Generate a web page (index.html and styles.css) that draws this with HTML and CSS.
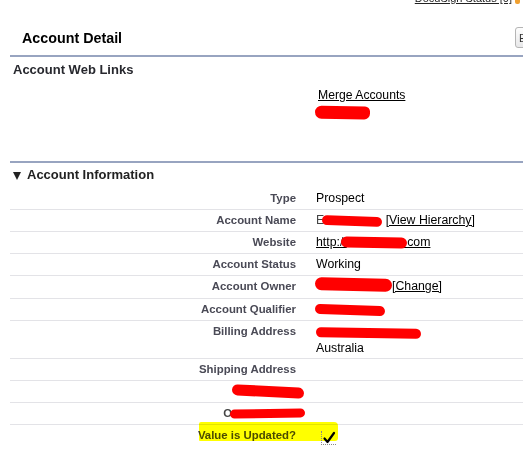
FILE: index.html
```html
<!DOCTYPE html>
<html lang="en">
<head>
<meta charset="utf-8">
<title>Account Detail</title>
<link rel="stylesheet" href="styles.css">
</head>
<body>
  <div class="topbar">
    <a class="toplink" href="#">DocuSign Status [0]</a>
    <span class="topicon"></span>
  </div>

  <div class="page">
    <div class="detail-head">
      <h2 class="detail-title">Account Detail</h2>
      <button class="btn" type="button">Edit</button>
    </div>

    <section class="links">
      <h3 class="section-title">Account Web Links</h3>
      <div class="link-list">
        <a class="plain-link" href="#">Merge Accounts</a>
        <span class="scrib scrib-weblink"></span>
      </div>
    </section>

    <section class="info">
      <h3 class="section-title info-title"><span class="tri"></span>Account Information</h3>
      <div class="fields">
        <div class="row">
          <div class="label">Type</div>
          <div class="value">Prospect</div>
        </div>
        <div class="row">
          <div class="label">Account Name</div>
          <div class="value"><span class="peek">E</span><span class="scrib scrib-name"></span> <a class="plain-link" href="#">[View Hierarchy]</a></div>
        </div>
        <div class="row">
          <div class="label">Website</div>
          <div class="value"><a class="plain-link" href="#">http://<span class="scrib scrib-web"></span>.com</a></div>
        </div>
        <div class="row">
          <div class="label">Account Status</div>
          <div class="value">Working</div>
        </div>
        <div class="row row-tall">
          <div class="label">Account Owner</div>
          <div class="value"><span class="scrib scrib-owner"></span><a class="plain-link" href="#">[Change]</a></div>
        </div>
        <div class="row">
          <div class="label">Account Qualifier</div>
          <div class="value"><span class="scrib scrib-qual"></span></div>
        </div>
        <div class="row">
          <div class="label">Billing Address</div>
          <div class="value value-address"><span class="scrib scrib-bill"></span><br>Australia</div>
        </div>
        <div class="row">
          <div class="label">Shipping Address</div>
          <div class="value"></div>
        </div>
        <div class="row">
          <div class="label"><span class="scrib scrib-lbl1"></span></div>
          <div class="value"></div>
        </div>
        <div class="row">
          <div class="label"><span class="peek">O</span><span class="scrib scrib-lbl2"></span></div>
          <div class="value"></div>
        </div>
        <div class="row row-last">
          <span class="marker"></span>
          <div class="label">Value is Updated?</div>
          <div class="value">
            <span class="checkimg">
              <svg width="14" height="13" viewBox="0 0 14 13">
                <path d="M2.5 7.5 L5.5 11 L12 2" fill="none" stroke="#000" stroke-width="2.2" stroke-linecap="round" stroke-linejoin="round"/>
              </svg>
            </span>
          </div>
        </div>
      </div>
    </section>
  </div>
</body>
</html>
```

FILE: styles.css
```css
html, body {
  margin: 0;
  padding: 0;
  overflow: hidden;
  background: #fff;
}

body {
  width: 523px;
  height: 463px;
  font-family: "Liberation Sans", Arial, sans-serif;
  font-size: 12px;
  color: #000;
}

/* clipped utility links along the very top */
.topbar {
  height: 6px;
  overflow: hidden;
  display: flex;
  justify-content: flex-end;
  align-items: flex-start;
  gap: 3px;
  padding-right: 3px;
}

.toplink {
  font-size: 11px;
  line-height: 13px;
  margin-top: -8px;
  color: #222;
  text-decoration: underline;
}

.topicon {
  width: 5px;
  height: 4px;
  background: #f0a030;
  border-radius: 0 0 2px 2px;
}

.page {
  margin-left: 10px;
}

/* block header */
.detail-head {
  display: flex;
  align-items: center;
  justify-content: space-between;
  padding: 21px 0 7px 12px;
  border-bottom: 2px solid #98a4c0;
  overflow: hidden;
}

.detail-title {
  margin: 0;
  font-size: 14.3px;
  line-height: 20px;
  font-weight: bold;
  color: #000;
}

.btn {
  flex-shrink: 0;
  height: 21px;
  margin-right: -22px;
  padding: 0 6px 0 3px;
  font-family: "Liberation Sans", Arial, sans-serif;
  font-size: 11px;
  color: #333;
  background: linear-gradient(#fdfdfd, #e8e8e9);
  border: 1px solid #b5b5b5;
  border-radius: 3px;
}

.section-title {
  margin: 0;
  font-size: 13px;
  line-height: 16px;
  font-weight: bold;
  color: #27282e;
}

/* web links */
.links {
  height: 104px;
  padding: 5px 0 0 3px;
  box-sizing: border-box;
}

.link-list {
  display: flex;
  flex-direction: column;
  align-items: flex-start;
  padding-left: 305px;
  padding-top: 10px;
  line-height: 15px;
  font-size: 12.2px;
}

.plain-link {
  color: #000;
  text-decoration: underline;
}

/* account information */
.info {
  border-top: 2px solid #98a4c0;
}

.info-title {
  display: flex;
  align-items: center;
  padding: 4px 0 5px 3px;
  color: #222;
}

.tri {
  width: 0;
  height: 0;
  border-left: 4.5px solid transparent;
  border-right: 4.5px solid transparent;
  border-top: 8px solid #222;
  margin-right: 6px;
  margin-top: 1px;
}

.fields {
  display: flex;
  flex-direction: column;
}

.row {
  position: relative;
  display: grid;
  grid-template-columns: 296px 1fr;
  border-bottom: 1px solid #e3e3e7;
}

.row-tall .value {
  padding-bottom: 4px;
}

.row-last {
  border-bottom: none;
}

.label {
  padding: 3px 10px 3px 2px;
  text-align: right;
  font-size: 11.4px;
  line-height: 15px;
  font-weight: bold;
  color: #4a4a56;
}

.value {
  padding: 3px 2px 3px 10px;
  font-size: 12.3px;
  line-height: 15px;
  color: #000;
  min-height: 15px;
}

.value-address {
  line-height: 16px;
  padding-bottom: 2px;
}

/* red marker strokes covering private values */
.scrib {
  display: inline-block;
  vertical-align: middle;
  background: #ff0000;
  border-radius: 8px;
}

.peek {
  color: #444;
}

.scrib-weblink {
  width: 55px;
  height: 13px;
  margin-left: -3px;
  margin-top: 3px;
  border-radius: 9px 7px 8px 9px;
  transform: rotate(1deg);
}

.scrib-name {
  width: 60px;
  height: 10px;
  margin-left: -2px;
  transform: rotate(2deg);
}

.scrib-web {
  width: 66px;
  height: 11px;
  margin: 0 -3px 0 -6px;
  transform: rotate(1deg);
}

.scrib-owner {
  width: 77px;
  height: 13px;
  margin-left: -1px;
  margin-top: -4px;
  transform: rotate(1.5deg);
}

.scrib-qual {
  width: 70px;
  height: 10px;
  margin-left: -1px;
  transform: rotate(2deg);
}

.scrib-bill {
  width: 105px;
  height: 10px;
  transform: rotate(1deg);
}

.scrib-lbl1 {
  width: 72px;
  height: 11px;
  margin-right: -8px;
  transform: rotate(3deg);
}

.scrib-lbl2 {
  width: 75px;
  height: 9px;
  margin-right: -9px;
  margin-left: -2px;
  transform: rotate(-1deg);
}

/* yellow highlighter stroke over the last field */
.marker {
  position: absolute;
  left: 189px;
  top: -3px;
  width: 139px;
  height: 19px;
  background: #ffff00;
  mix-blend-mode: multiply;
  border-radius: 2px 4px 3px 1px;
  z-index: 1;
}

.checkimg {
  display: inline-block;
  margin-left: 5px;
  margin-top: 3px;
  width: 14px;
  height: 13px;
  border-left: 1px dotted #888;
  border-bottom: 1px dotted #888;
  position: relative;
  z-index: 2;
}

.checkimg svg {
  display: block;
}
```
